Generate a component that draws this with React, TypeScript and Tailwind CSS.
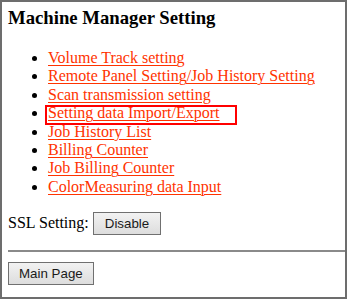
const links = [
  "Volume Track setting",
  "Remote Panel Setting/Job History Setting",
  "Scan transmission setting",
  "Setting data Import/Export",
  "Job History List",
  "Billing Counter",
  "Job Billing Counter",
  "ColorMeasuring data Input",
];

function GrayButton({ label, wide }: { label: string; wide?: boolean }) {
  return (
    <button
      className={
        "h-[23px] border border-[#707070] bg-gradient-to-b from-[#f2f2f2] to-[#dddddd] text-[13.33px] leading-none text-[#1a1a1a] font-['Liberation_Sans',Arial,sans-serif] " +
        (wide ? "px-[11px]" : "px-[10px]")
      }
    >
      {label}
    </button>
  );
}

export default function App() {
  return (
    <div className="relative w-[347px] h-[299px] overflow-hidden border-2 border-[#6d6d6d] bg-white font-['Liberation_Serif','Times_New_Roman',serif] text-black">
      <div className="pl-[6px] pt-[5px]">
        <h3 className="text-[18.72px] leading-[22px] font-bold">Machine Manager Setting</h3>

        <ul className="mt-[20px] pl-[40px] list-disc text-[16px] leading-[18.4px]">
          {links.map((l) => (
            <li key={l}>
              <a href="#" className="text-[#ff3300] underline decoration-1 underline-offset-[2px]">
                {l}
              </a>
            </li>
          ))}
        </ul>

        <div className="mt-[15px] flex items-center gap-[4px] text-[16px]">
          <span>SSL Setting:</span>
          <GrayButton label="Disable" wide />
        </div>

        <hr className="mt-[15px] border-t-2 border-[#8a8a8a] -mr-[10px]" />

        <div className="mt-[9px]">
          <GrayButton label="Main Page" />
        </div>
      </div>

      {/* highlight box */}
      <div className="absolute left-[43px] top-[103px] w-[192px] h-[20px] border-2 border-[#ff0000]" />
    </div>
  );
}
